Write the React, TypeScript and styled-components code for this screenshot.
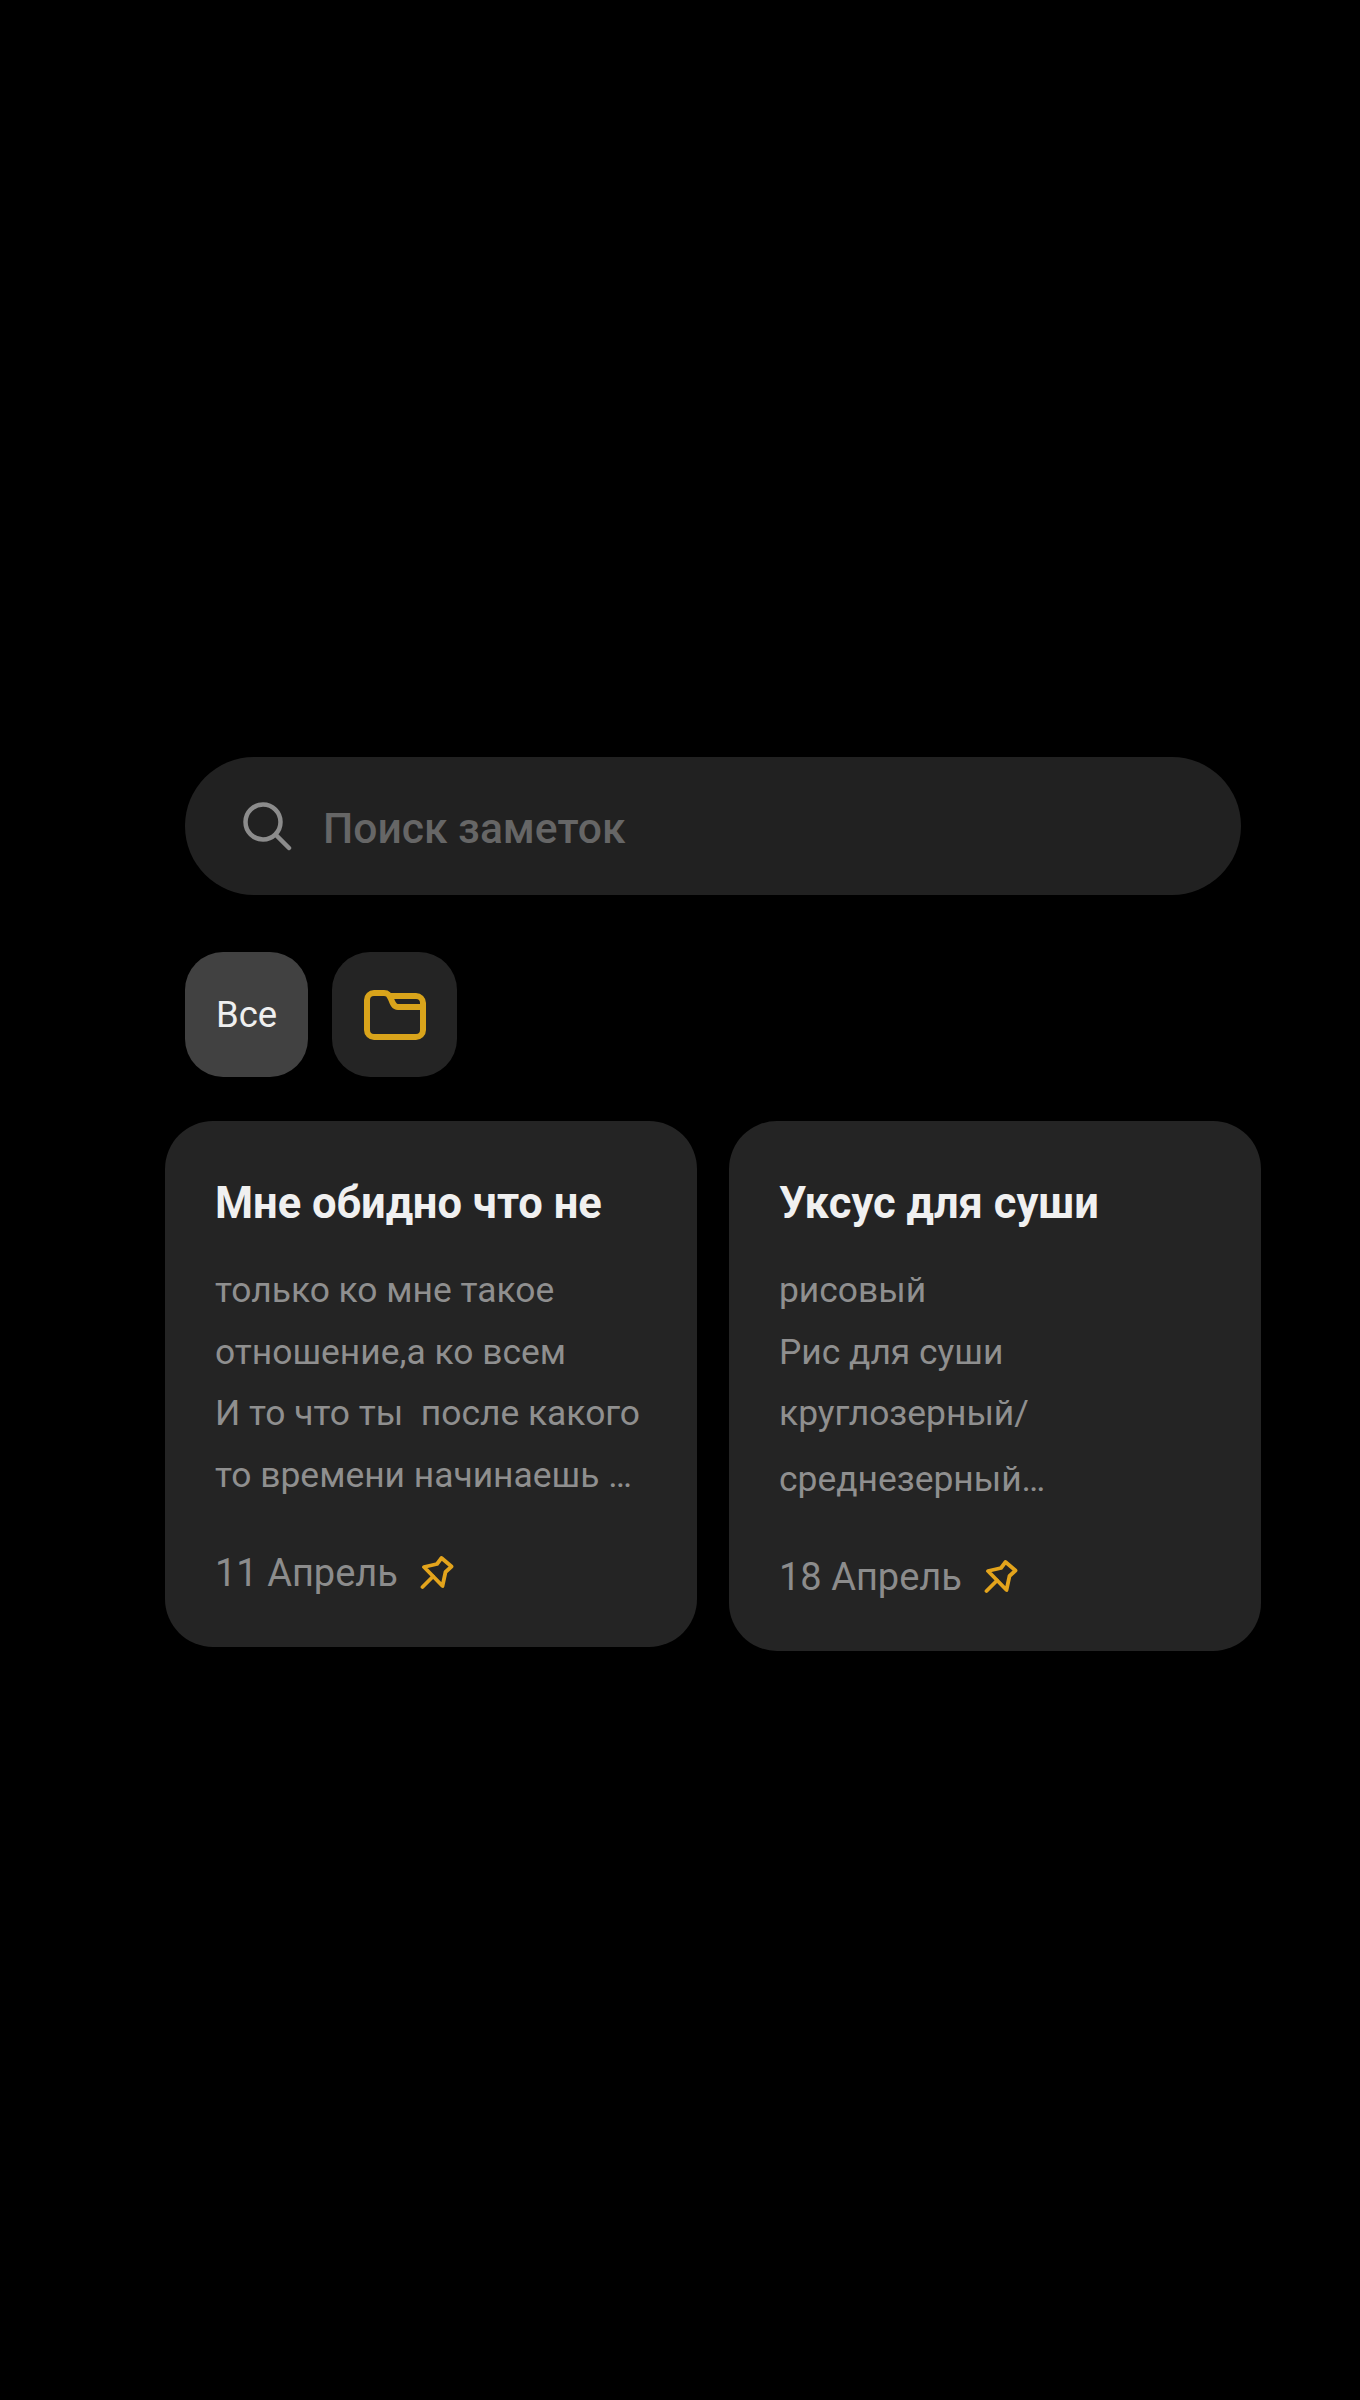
import styled, { createGlobalStyle } from "styled-components";

const GlobalStyle = createGlobalStyle`
  html, body {
    margin: 0;
    padding: 0;
    background: #000;
    font-family: Roboto, "Noto Sans", sans-serif;
  }
`;

const Page = styled.div`
  width: 1360px;
  height: 2400px;
  padding-top: 757px;
  box-sizing: border-box;
  background: #000;
  overflow: hidden;
`;

const SearchBar = styled.div`
  display: flex;
  align-items: center;
  gap: 31px;
  width: 1056px;
  height: 138px;
  margin-left: 185px;
  padding-left: 57px;
  box-sizing: border-box;
  border-radius: 69px;
  background: #212121;
`;

const SearchText = styled.span`
  padding-top: 3px;
  font-size: 42.6px;
  font-weight: 500;
  color: #666;
`;

const Chips = styled.div`
  display: flex;
  gap: 24px;
  margin: 57px 0 0 185px;
`;

const Chip = styled.div<{ $active?: boolean }>`
  display: flex;
  align-items: center;
  justify-content: center;
  width: ${(p) => (p.$active ? "123px" : "125px")};
  height: 125px;
  border-radius: 38px;
  background: ${(p) => (p.$active ? "#414141" : "#242424")};
  color: #efefef;
  font-size: 36.5px;
`;

const Cards = styled.div`
  display: flex;
  align-items: flex-start;
  gap: 32px;
  margin: 44px 0 0 165px;
`;

const Card = styled.div`
  width: 532px;
  padding: 57px 30px 0 50px;
  box-sizing: border-box;
  border-radius: 48px;
  background: #242424;
`;

const Title = styled.div`
  font-size: 43.5px;
  font-weight: 700;
  line-height: 52px;
  color: #f0f0f0;
  white-space: nowrap;
`;

const Body = styled.div`
  margin-top: 30px;
`;

const Line = styled.div<{ $last?: boolean }>`
  font-size: 35.4px;
  line-height: 61.5px;
  color: #8f8f8f;
  white-space: pre;
  margin-top: ${(p) => (p.$last ? "4px" : "0")};
`;

const Footer = styled.div`
  display: flex;
  align-items: center;
  gap: 22px;
  height: 50px;
  margin-top: 42px;
  padding-bottom: 49px;
`;

const DateText = styled.span`
  font-size: 38px;
  color: #8c8c8c;
`;

const SearchIcon = () => (
  <svg width="50" height="50" viewBox="0 0 50 50" fill="none" stroke="#8c8c8c" strokeWidth="4.5" strokeLinecap="round">
    <circle cx="21" cy="21" r="17.5" />
    <path d="M34 34 L47 47" />
  </svg>
);

const FolderIcon = () => (
  <svg width="62" height="50" viewBox="0 0 62 50" fill="none" stroke="#d9a41b" strokeWidth="6" strokeLinejoin="round">
    <path d="M10 3 H20 C24 3 25 5 27 9 C28.5 13 30 17 34 17 H59 V40 a7 7 0 0 1 -7 7 H10 a7 7 0 0 1 -7 -7 V10 a7 7 0 0 1 7 -7 Z" />
    <path d="M25 6 H52 a7 7 0 0 1 7 7 V17" />
  </svg>
);

const PinIcon = () => (
  <svg width="34" height="34" viewBox="0 0 34 34" fill="none" stroke="#e3a41c" strokeWidth="3.8" strokeLinecap="round" strokeLinejoin="round">
    <path d="M2.5 31 L13 20.5" />
    <path d="M4 11 L17 8 L21.5 2 L31.5 10.5 L25.5 16 L22.5 30 Z" />
  </svg>
);

const notes = [
  {
    title: "Мне обидно что не",
    lines: ["только ко мне такое", "отношение,а ко всем", "И то что ты  после какого", "то времени начинаешь …"],
    date: "11 Апрель",
    tallLast: false,
  },
  {
    title: "Уксус для суши",
    lines: ["рисовый", "Рис для суши", "круглозерный/", "среднезерный…"],
    date: "18 Апрель",
    tallLast: true,
  },
];

const App = () => {
  return (
    <>
      <GlobalStyle />
      <Page>
        <SearchBar>
          <SearchIcon />
          <SearchText>Поиск заметок</SearchText>
        </SearchBar>
        <Chips>
          <Chip $active>Все</Chip>
          <Chip>
            <FolderIcon />
          </Chip>
        </Chips>
        <Cards>
          {notes.map((note) => (
            <Card key={note.date}>
              <Title>{note.title}</Title>
              <Body>
                {note.lines.map((line, i) => (
                  <Line key={line} $last={note.tallLast && i === note.lines.length - 1}>
                    {line}
                  </Line>
                ))}
              </Body>
              <Footer>
                <DateText>{note.date}</DateText>
                <PinIcon />
              </Footer>
            </Card>
          ))}
        </Cards>
      </Page>
    </>
  );
};

export default App;
